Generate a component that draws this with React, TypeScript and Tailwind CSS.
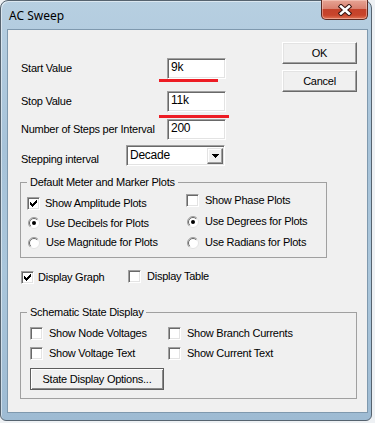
const FONT = "font-['Liberation_Sans',Arial,sans-serif] text-[11px] tracking-[-0.25px] leading-[15px] text-black";

function Check({ checked }: { checked?: boolean }) {
  return (
    <span className="w-[13px] h-[13px] shrink-0 bg-white border border-t-[#a0a0a0] border-l-[#a0a0a0] border-b-white border-r-white shadow-[inset_1px_1px_0_#696969,inset_-1px_-1px_0_#e3e3e3] flex items-center justify-center">
      {checked && (
        <svg width="7" height="7" viewBox="0 0 7 7" shapeRendering="crispEdges">
          <path
            d="M0 2h1v3h-1zM1 3h1v3h-1zM2 4h1v3h-1zM3 3h1v3h-1zM4 2h1v3h-1zM5 1h1v3h-1zM6 0h1v3h-1z"
            fill="#000"
          />
        </svg>
      )}
    </span>
  );
}

function Radio({ checked }: { checked?: boolean }) {
  return (
    <svg width="12" height="12" viewBox="0 0 12 12" className="shrink-0">
      <circle cx="6" cy="6" r="5.5" fill="#fff" stroke="#e3e3e3" />
      <path d="M2.1 9.9A5.5 5.5 0 0 1 9.9 2.1" fill="none" stroke="#a0a0a0" />
      <path d="M2.8 9.2A4.5 4.5 0 0 1 9.2 2.8" fill="none" stroke="#696969" />
      {checked && <circle cx="6" cy="6" r="2" fill="#000" />}
    </svg>
  );
}

function CheckItem({ label, checked, gap = "gap-[5px]" }: { label: string; checked?: boolean; gap?: string }) {
  return (
    <div className={`flex items-center ${gap}`}>
      <Check checked={checked} />
      <span className="whitespace-nowrap">{label}</span>
    </div>
  );
}

function RadioItem({ label, checked }: { label: string; checked?: boolean }) {
  return (
    <div className="flex items-center gap-[6px]">
      <Radio checked={checked} />
      <span className="whitespace-nowrap">{label}</span>
    </div>
  );
}

function Field({ value }: { value: string }) {
  return (
    <div className="w-[59px] h-[21px] bg-white border border-t-[#a0a0a0] border-l-[#a0a0a0] border-b-white border-r-white shadow-[inset_1px_1px_0_#696969,inset_-1px_-1px_0_#e3e3e3] pl-[3px] text-[12px] leading-[17px]">
      {value}
    </div>
  );
}

function Button({ label, className }: { label: string; className: string }) {
  return (
    <button
      className={`${className} bg-[#f0f0f0] border border-t-white border-l-white border-b-[#696969] border-r-[#696969] shadow-[inset_-1px_-1px_0_#a0a0a0,inset_1px_1px_0_#e3e3e3] flex items-center justify-center`}
    >
      {label}
    </button>
  );
}

export default function App() {
  return (
    <div className="w-[375px] h-[423px] bg-[#eef1f4] overflow-hidden">
      <div className="w-[372px] h-[421px] rounded-t-[8px] rounded-b-[6px] border border-[#56636f] bg-[linear-gradient(180deg,#b7cfe1_0%,#a7c3d9_35%,#aac6db_65%,#9ebbd3_100%)] shadow-[inset_1px_1px_0_rgba(255,255,255,0.5)] flex flex-col pl-[6px] pr-[3px] pb-[7px]">
        {/* Title bar */}
        <div className="h-[28px] shrink-0 flex items-start justify-between">
          <span className="pl-[2px] pt-[7px] text-[12px] leading-[16px] font-['Noto_Sans',sans-serif] text-black">
            AC Sweep
          </span>
          <div className="-mt-[1px] w-[47px] h-[20px] rounded-b-[5px] border border-[#5b2a22] border-t-0 bg-[linear-gradient(180deg,#e6a494_0%,#d98170_45%,#c4422a_50%,#c8452c_80%,#e07556_100%)] shadow-[inset_0_0_0_1px_rgba(255,220,210,0.45)] flex items-center justify-center">
            <svg width="14" height="12" viewBox="0 0 14 12">
              <path d="M3 2.5L11 9.5M11 2.5L3 9.5" stroke="#3b1712" strokeWidth="4.6" strokeLinecap="square" />
              <path d="M3 2.5L11 9.5M11 2.5L3 9.5" stroke="#fff" strokeWidth="2.6" strokeLinecap="square" />
            </svg>
          </div>
        </div>

        {/* Client area */}
        <div className={`flex-1 border border-[#7f99ae] bg-[#f0f0f0] flex flex-col ${FONT}`}>
          <div className="flex justify-between">
            <div className="pl-[13px] pt-[28px] flex flex-col">
              <div className="relative flex items-center h-[21px]">
                <span className="w-[146px]">Start Value</span>
                <Field value="9k" />
                <div className="absolute left-[138px] top-[21px] w-[59px] h-[3px] bg-[#ed1c24]" />
              </div>
              <div className="relative flex items-center h-[21px] mt-[12px]">
                <span className="w-[146px]">Stop Value</span>
                <Field value="11k" />
                <div className="absolute left-[138px] top-[24px] w-[70px] h-[3px] bg-[#ed1c24]" />
              </div>
              <div className="flex items-center h-[21px] mt-[7px]">
                <span className="w-[146px] whitespace-nowrap">Number of Steps per Interval</span>
                <Field value="200" />
              </div>
              <div className="flex items-start h-[21px] mt-[5px]">
                <span className="w-[105px] pt-[7px] whitespace-nowrap">Stepping interval</span>
                <div className="w-[99px] h-[21px] bg-white border border-t-[#a0a0a0] border-l-[#a0a0a0] border-b-white border-r-white shadow-[inset_1px_1px_0_#696969,inset_-1px_-1px_0_#e3e3e3] flex items-center p-[1px]">
                  <span className="flex-1 pl-[2px] text-[12px]">Decade</span>
                  <span className="w-[16px] h-[16px] bg-[#f0f0f0] border border-t-[#e3e3e3] border-l-[#e3e3e3] border-b-[#696969] border-r-[#696969] shadow-[inset_-1px_-1px_0_#a0a0a0,inset_1px_1px_0_#fff] flex items-center justify-center">
                    <svg width="7" height="4" viewBox="0 0 7 4" shapeRendering="crispEdges">
                      <path d="M0 0h7v1h-7zM1 1h5v1h-5zM2 2h3v1h-3zM3 3h1v1h-1z" fill="#000" />
                    </svg>
                  </span>
                </div>
              </div>
            </div>
            <div className="pt-[12px] pr-[10px] flex flex-col gap-[6px]">
              <Button label="OK" className="w-[75px] h-[22px]" />
              <Button label="Cancel" className="w-[75px] h-[22px]" />
            </div>
          </div>

          {/* Default Meter and Marker Plots */}
          <fieldset className="mt-[10px] ml-[12px] w-[307px] border border-[#a0a0a0]">
            <legend className="ml-[6px] px-[3px] leading-[13px]">Default Meter and Marker Plots</legend>
            <div className="flex h-[68px]">
              <div className="w-[165px] pl-[6px] pt-[4px] flex flex-col">
                <div className="h-[20px] flex items-center">
                  <CheckItem label="Show Amplitude Plots" checked />
                </div>
                <div className="h-[20px] flex items-center pl-[1px]">
                  <RadioItem label="Use Decibels for Plots" checked />
                </div>
                <div className="h-[19px] flex items-center pl-[1px]">
                  <RadioItem label="Use Magnitude for Plots" />
                </div>
              </div>
              <div className="pt-[1px] flex flex-col">
                <div className="h-[21px] flex items-center">
                  <CheckItem label="Show Phase Plots" gap="gap-[6px]" />
                </div>
                <div className="h-[21px] flex items-center pl-[1px]">
                  <RadioItem label="Use Degrees for Plots" checked />
                </div>
                <div className="h-[21px] flex items-center pl-[1px]">
                  <RadioItem label="Use Radians for Plots" />
                </div>
              </div>
            </div>
          </fieldset>

          <div className="mt-[12px] h-[14px] pl-[13px] flex items-center">
            <div className="w-[107px]">
              <CheckItem label="Display Graph" checked gap="gap-[4px]" />
            </div>
            <div className="-mt-[2px]">
              <CheckItem label="Display Table" gap="gap-[6px]" />
            </div>
          </div>

          {/* Schematic State Display */}
          <fieldset className="mt-[22px] ml-[12px] w-[337px] border border-[#a0a0a0]">
            <legend className="ml-[6px] px-[3px] leading-[13px]">Schematic State Display</legend>
            <div className="pl-[9px] pt-[4px] pb-[8px] flex flex-col">
              <div className="h-[20px] flex items-center">
                <div className="w-[138px]">
                  <CheckItem label="Show Node Voltages" gap="gap-[6px]" />
                </div>
                <CheckItem label="Show Branch Currents" gap="gap-[6px]" />
              </div>
              <div className="h-[20px] flex items-center">
                <div className="w-[138px]">
                  <CheckItem label="Show Voltage Text" gap="gap-[6px]" />
                </div>
                <CheckItem label="Show Current Text" gap="gap-[6px]" />
              </div>
              <button className="mt-[5px] w-[134px] h-[22px] bg-[#f0f0f0] border border-[#5e5e5e] shadow-[inset_1px_1px_0_#fff,inset_-1px_-1px_0_#8a8a8a] flex items-center justify-center">
                State Display Options...
              </button>
            </div>
          </fieldset>
        </div>
      </div>
    </div>
  );
}
